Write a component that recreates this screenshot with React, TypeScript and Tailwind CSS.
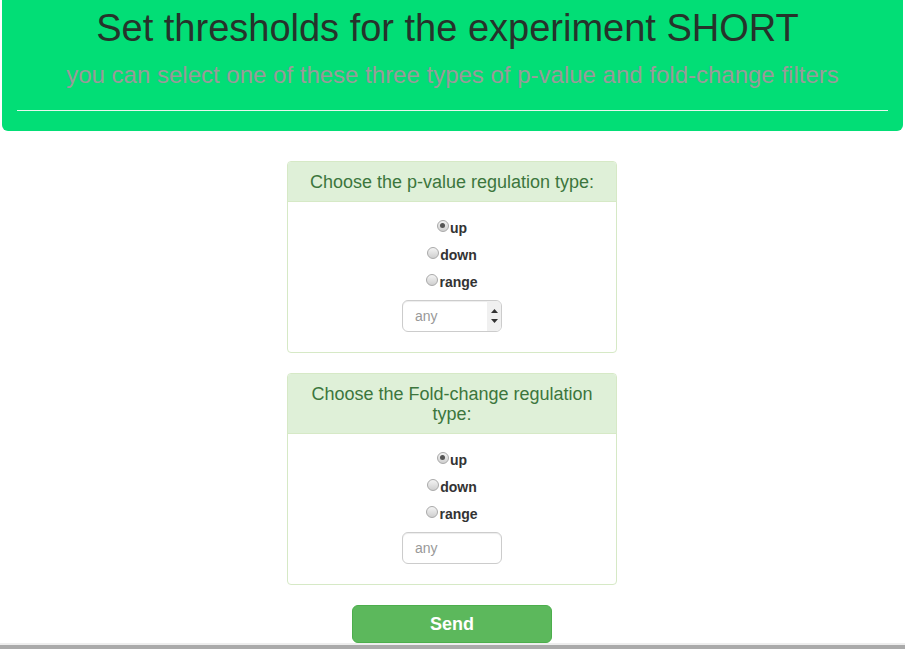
const font = { fontFamily: '"Liberation Sans", Arial, Helvetica, sans-serif' }

function Radio({ checked, label }: { checked?: boolean; label: string }) {
  return (
    <div className="flex h-[27px] items-center justify-center">
      <label className="flex items-center text-[14px] font-bold text-[#333]">
        <span className="relative -mt-[6px] mr-[1px] flex h-[12px] w-[12px] items-center justify-center rounded-full border border-[#a9a9a9] bg-gradient-to-b from-[#f4f4f4] to-[#cfcfcf]">
          {checked && <span className="h-[5px] w-[5px] rounded-full bg-[#555]" />}
        </span>
        {label}
      </label>
    </div>
  )
}

function AnyInput({ spinner }: { spinner?: boolean }) {
  return (
    <div className="mx-auto mt-[4px] flex h-[32px] w-[100px] items-center overflow-hidden rounded-[6px] border border-[#ccc] bg-white shadow-[inset_0_1px_1px_rgba(0,0,0,0.075)]">
      <span className="flex-1 pl-[12px] text-[14px] text-[#999]">any</span>
      {spinner && (
        <div className="flex h-full w-[14px] flex-col items-center justify-center gap-[6px] bg-[#f0f0f0]">
          <svg width="7" height="4" viewBox="0 0 7 4">
            <path d="M0 4 L3.5 0 L7 4 Z" fill="#333" />
          </svg>
          <svg width="7" height="4" viewBox="0 0 7 4">
            <path d="M0 0 L3.5 4 L7 0 Z" fill="#333" />
          </svg>
        </div>
      )}
    </div>
  )
}

function Panel({ title, spinner }: { title: string; spinner?: boolean }) {
  return (
    <div className="mx-auto mb-[20px] w-[330px] overflow-hidden rounded-[4px] border border-[#d6e9c6] bg-white">
      <div className="border-b border-[#d6e9c6] bg-[#dff0d8] px-[15px] pb-[9px] pt-[10px] text-center text-[18px] leading-[20px] text-[#3c763d]">
        {title}
      </div>
      <div className="px-[15px] pb-[20px] pt-[13px]">
        <Radio checked label="up" />
        <Radio label="down" />
        <Radio label="range" />
        <AnyInput spinner={spinner} />
      </div>
    </div>
  )
}

export default function App() {
  return (
    <div className="flex h-[649px] w-full flex-col overflow-hidden bg-white" style={font}>
      {/* header */}
      <div className="mx-[2px] h-[131px] shrink-0 rounded-b-[6px] bg-[#02de76] px-[15px] pt-[7px]">
        <h1 className="pr-[10px] text-center text-[38px] leading-[42px] text-[#26332b]">
          Set thresholds for the experiment SHORT
        </h1>
        <p className="mt-[12px] text-center text-[24px] leading-[28px] text-[#9a9a9a]">
          you can select one of these three types of p-value and fold-change filters
        </p>
        <div className="mt-[21px] h-px bg-[#e8f8ee]" />
      </div>

      <div className="shrink-0 pr-[1px] pt-[30px]">
        <Panel title="Choose the p-value regulation type:" spinner />
        <Panel title="Choose the Fold-change regulation type:" />
        <button className="mx-auto mt-[1px] block h-[38px] w-[200px] rounded-[6px] border border-[#4cae4c] bg-[#5cb85c] text-[18px] font-bold text-white">
          Send
        </button>
      </div>

      <div className="mt-auto h-[2px] shrink-0 bg-[#eee]" />
      <div className="h-[6px] shrink-0 bg-[#aaa]" />
    </div>
  )
}
